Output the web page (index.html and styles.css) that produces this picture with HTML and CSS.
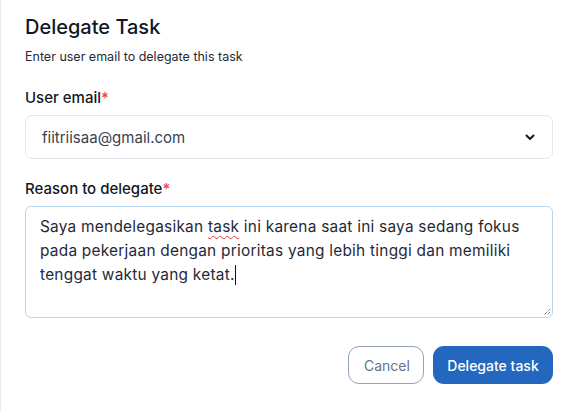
FILE: index.html
```html
<!DOCTYPE html>
<html>
<head>
<meta charset="utf-8">
<link rel="stylesheet" href="styles.css">
</head>
<body>
<div class="dialog">
  <h1 class="title">Delegate Task</h1>
  <p class="subtitle">Enter user email to delegate this task</p>
  <div class="field">
    <label class="label">User email<span class="req">*</span></label>
    <div class="select">
      <span class="select-value">fiitriisaa@gmail.com</span>
      <svg class="chev" width="10" height="7" viewBox="0 0 10 7"><path d="M1.5 1.5 L5 5 L8.5 1.5" fill="none" stroke="#111827" stroke-width="2" stroke-linecap="round" stroke-linejoin="round"/></svg>
    </div>
  </div>
  <div class="field">
    <label class="label">Reason to delegate<span class="req">*</span></label>
    <div class="textarea">
      <p class="ta-text">Saya mendelegasikan <span class="spell">task</span> ini karena saat ini saya sedang fokus pada pekerjaan dengan prioritas yang lebih tinggi dan memiliki tenggat waktu yang ketat.<span class="caret"></span></p>
      <svg class="grip" width="9" height="9" viewBox="0 0 9 9"><path d="M8 2 L2 8 M8 5 L5 8" stroke="#555" stroke-width="1" stroke-dasharray="1 1"/></svg>
    </div>
  </div>
  <div class="actions">
    <button class="btn btn-cancel">Cancel</button>
    <button class="btn btn-primary">Delegate task</button>
  </div>
</div>
</body>
</html>
```
FILE: styles.css
```css
* { box-sizing: border-box; }
html, body { margin: 0; padding: 0; background: #fff; }
body {
  font-family: Inter, "Liberation Sans", sans-serif;
  color: #111827;
  border-left: 1px solid #ececec;
  min-height: 412px;
}
.dialog {
  padding: 14px 16px 0 24px;
}
.title {
  margin: 0;
  font-size: 20px;
  font-weight: 500;
  line-height: 26px;
  color: #0f172a;
}
.subtitle {
  margin: 9px 0 0;
  font-size: 12.5px;
  line-height: 16px;
  color: #1f2937;
}
.field { margin-top: 23px; }
.field + .field { margin-top: 20px; }
.label {
  display: block;
  font-size: 15px;
  font-weight: 500;
  line-height: 20px;
  color: #111827;
}
.req { color: #ef4444; }
.select {
  margin-top: 7px;
  height: 44px;
  border: 1px solid #e2e8f0;
  border-radius: 7px;
  display: flex;
  align-items: center;
  justify-content: space-between;
  padding: 0 17px 0 16px;
}
.select-value { font-size: 15px; color: #374151; }
.chev { display: block; }
.textarea {
  position: relative;
  margin-top: 7px;
  height: 112px;
  border: 1px solid #b5d6f2;
  border-radius: 6px;
  padding: 8px 14px;
}
.ta-text {
  margin: 0;
  font-size: 15.4px;
  letter-spacing: 0.25px;
  line-height: 24px;
  color: #1f2937;
}
.spell {
  text-decoration: underline wavy #e53935;
  text-decoration-thickness: 1px;
  text-underline-offset: 3px;
}
.caret {
  display: inline-block;
  width: 1px;
  height: 20px;
  background: #111;
  vertical-align: -5px;
}
.grip { position: absolute; right: 1px; bottom: 1px; }
.actions {
  display: flex;
  justify-content: flex-end;
  gap: 9px;
  margin-top: 28px;
}
.btn {
  font-family: inherit;
  font-size: 14px;
  height: 38px;
  border-radius: 11px;
  cursor: pointer;
}
.btn-cancel {
  background: #fff;
  border: 1px solid #94a3b8;
  color: #64748b;
  padding: 0 15px;
  width: 76px;
}
.btn-primary {
  background: #2368be;
  border: none;
  color: #fff;
  width: 120px;
  font-weight: 500;
}
```
